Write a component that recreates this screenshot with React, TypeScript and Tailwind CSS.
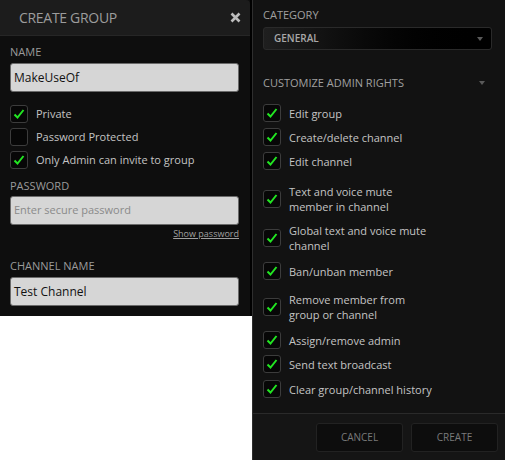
import React from "react";

const font = { fontFamily: '"Open Sans", "Noto Sans", sans-serif' };

function Check({ on }: { on: boolean }) {
  return (
    <div className="flex h-[18px] w-[18px] shrink-0 items-center justify-center rounded-[3px] border border-[#3c3c3c] bg-[#070707]">
      {on && (
        <svg width="14" height="14" viewBox="0 0 14 14">
          <path d="M2.5 7.5 L5.5 10.5 L11.5 3" fill="none" stroke="#22e622" strokeWidth="2" />
        </svg>
      )}
    </div>
  );
}

function Field({ value, placeholder }: { value?: string; placeholder?: string }) {
  return (
    <div className="flex h-[29px] w-[229px] items-center rounded-[3px] border border-[#6a6a6a] bg-[#d6d6d6] px-[3px]">
      {value ? (
        <span className="text-[12px] text-[#111]">{value}</span>
      ) : (
        <span className="text-[11px] text-[#8a8a8a]">{placeholder}</span>
      )}
    </div>
  );
}

const rights: { label: string[]; mt: string }[] = [
  { label: ["Edit group"], mt: "mt-0" },
  { label: ["Create/delete channel"], mt: "mt-[6px]" },
  { label: ["Edit channel"], mt: "mt-[6px]" },
  { label: ["Text and voice mute", "member in channel"], mt: "mt-[14px]" },
  { label: ["Global text and voice mute", "channel"], mt: "mt-[9px]" },
  { label: ["Ban/unban member"], mt: "mt-[9px]" },
  { label: ["Remove member from", "group or channel"], mt: "mt-[12px]" },
  { label: ["Assign/remove admin"], mt: "mt-[9px]" },
  { label: ["Send text broadcast"], mt: "mt-[6px]" },
  { label: ["Clear group/channel history"], mt: "mt-[7px]" },
];

export default function App() {
  return (
    <div className="flex h-[460px] w-[505px] items-start bg-white" style={font}>
      <section className="h-[316px] w-[252px] shrink-0 border-r-2 border-black bg-[#0e0e0e]">
        <div className="flex h-[36px] items-center justify-between rounded-tr-[4px] border-b border-[#262626] bg-[#1c1c1c] pl-[19px] pr-[9px]">
          <span className="text-[14px] tracking-[-0.3px] text-[#9c9c9c]">CREATE GROUP</span>
          <svg width="11" height="11" viewBox="0 0 11 11">
            <path d="M1.5 1.5 L9.5 9.5 M9.5 1.5 L1.5 9.5" stroke="#bdbdbd" strokeWidth="2.6" />
          </svg>
        </div>
        <div className="px-[10px]">
          <div className="mt-[8px] text-[11px] leading-[16px] text-[#9a9a9a]">NAME</div>
          <div className="mt-[3px]">
            <Field value="MakeUseOf" />
          </div>
          <div className="mt-[13px] flex flex-col gap-[5px] text-[11px] text-[#c4c4c4]">
            {[
              ["Private", true],
              ["Password Protected", false],
              ["Only Admin can invite to group", true],
            ].map(([t, on]) => (
              <div key={t as string} className="flex h-[18px] items-center gap-[8px]">
                <Check on={on as boolean} />
                <span>{t as string}</span>
              </div>
            ))}
          </div>
          <div className="mt-[9px] text-[11px] leading-[16px] text-[#9a9a9a]">PASSWORD</div>
          <div className="mt-[2px]">
            <Field placeholder="Enter secure password" />
          </div>
          <div className="flex w-[229px] justify-end">
            <span className="mt-[3px] text-[9px] leading-[12px] text-[#a0a0a0] underline">Show password</span>
          </div>
          <div className="mt-[18px] text-[11px] leading-[16px] text-[#9a9a9a]">CHANNEL NAME</div>
          <div className="mt-[3px]">
            <Field value="Test Channel" />
          </div>
        </div>
      </section>
      <section className="flex h-[460px] flex-1 flex-col border-l border-[#2e2e2e] bg-[#121212]">
        <div className="flex-1 pl-[10px] pr-[13px]">
          <div className="mt-[7px] text-[11px] leading-[16px] text-[#a0a0a0]">CATEGORY</div>
          <div className="mt-[4px] flex h-[23px] items-center justify-between rounded-[3px] border border-[#2a2a2a] bg-gradient-to-r from-[#1f1f1f] via-[#070707] to-black pl-[10px] pr-[8px]">
            <span className="text-[10px] font-semibold text-[#a8a8a8]">GENERAL</span>
            <svg width="6" height="4" viewBox="0 0 6 4">
              <path d="M0 0 H6 L3 4 Z" fill="#5a5a5a" />
            </svg>
          </div>
          <div className="mt-[25px] flex items-center justify-between pr-[7px]">
            <span className="text-[11px] leading-[16px] text-[#a0a0a0]">CUSTOMIZE ADMIN RIGHTS</span>
            <svg width="6" height="4" viewBox="0 0 6 4">
              <path d="M0 0 H6 L3 4 Z" fill="#5a5a5a" />
            </svg>
          </div>
          <div className="mt-[13px] flex flex-col text-[11px] leading-[15px] text-[#c4c4c4]">
            {rights.map((r) => (
              <div key={r.label[0]} className={`flex items-center gap-[8px] ${r.mt}`}>
                <Check on />
                <div className="flex flex-col">
                  {r.label.map((l) => (
                    <span key={l}>{l}</span>
                  ))}
                </div>
              </div>
            ))}
          </div>
        </div>
        <div className="flex h-[47px] items-center justify-end gap-[8px] border-t border-[#2a2a2a] bg-[#151515] pr-[7px]">
          <div className="flex h-[29px] w-[87px] items-center justify-center rounded-[3px] border border-[#222] bg-[#0d0d0d] text-[10px] text-[#7a7a7a]">
            CANCEL
          </div>
          <div className="flex h-[29px] w-[87px] items-center justify-center rounded-[3px] border border-[#222] bg-[#0d0d0d] text-[10px] text-[#7a7a7a]">
            CREATE
          </div>
        </div>
      </section>
    </div>
  );
}
